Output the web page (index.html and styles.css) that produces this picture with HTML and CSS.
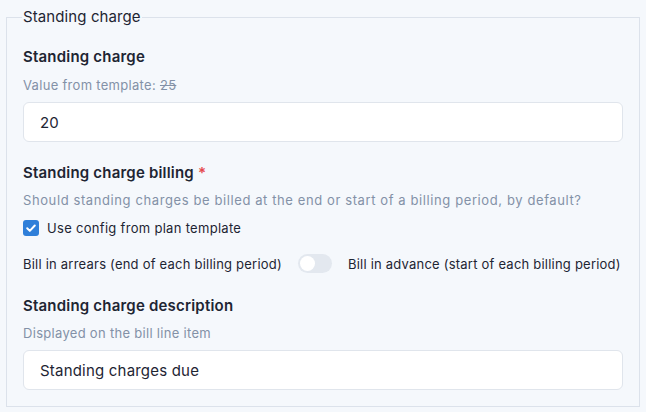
FILE: index.html
```html
<!DOCTYPE html>
<html lang="en">
<head>
<meta charset="utf-8">
<link rel="stylesheet" href="styles.css">
</head>
<body>
<fieldset class="group">
  <legend class="legend">Standing charge</legend>

  <div class="field">
    <div class="label">Standing charge</div>
    <div class="hint">Value from template: <s>25</s></div>
    <div class="input">20</div>
  </div>

  <div class="field">
    <div class="label">Standing charge billing <span class="req">*</span></div>
    <div class="hint hint-wide">Should standing charges be billed at the end or start of a billing period, by default?</div>
    <label class="check">
      <span class="box"><svg viewBox="0 0 16 16" width="16" height="16"><path d="M4.2 8.3l2.6 2.6 5-5.4" fill="none" stroke="#fff" stroke-width="2" stroke-linecap="round" stroke-linejoin="round"/></svg></span>
      <span>Use config from plan template</span>
    </label>
    <div class="switchrow">
      <span class="opt">Bill in arrears (end of each billing period)</span>
      <span class="toggle"><span class="knob"></span></span>
      <span class="opt">Bill in advance (start of each billing period)</span>
    </div>
  </div>

  <div class="field field-last">
    <div class="label">Standing charge description</div>
    <div class="hint hint-tight">Displayed on the bill line item</div>
    <div class="input">Standing charges due</div>
  </div>
</fieldset>
</body>
</html>
```
FILE: styles.css
```css
html, body {
  margin: 0;
  background: #f5f8fc;
}
body {
  padding: 8px 6px 6px 6px;
  font-family: Inter, "Noto Sans", sans-serif;
  color: #1e2533;
}
.group {
  margin: 0;
  min-width: 0;
  border: 1px solid #dce2eb;
  padding: 0 16px 16px 16px;
  height: 399px;
  box-sizing: border-box;
}
.legend {
  font-size: 15px;
  padding: 0 1px;
  margin-left: -1px;
  line-height: 18px;
  letter-spacing: 0.1px;
}
.field {
  display: flex;
  flex-direction: column;
  margin-top: 21px;
}
.field-last {
  margin-top: 23px;
}
.label {
  font-size: 15px;
  font-weight: 600;
  line-height: 20px;
  letter-spacing: 0.2px;
}
.req {
  color: #e5484d;
}
.hint {
  font-size: 13px;
  color: #8391a7;
  line-height: 18px;
  margin-top: 9px;
  letter-spacing: 0.3px;
}
.hint-wide {
  margin-top: 8px;
  letter-spacing: 0.6px;
}
.hint-tight {
  margin-top: 8px;
}
.input {
  margin-top: 8px;
  height: 40px;
  box-sizing: border-box;
  border: 1px solid #e0e5ec;
  border-radius: 6px;
  background: #fff;
  padding: 0 16px;
  display: flex;
  align-items: center;
  font-size: 15px;
  letter-spacing: 0.2px;
}
.check {
  margin-top: 10px;
  display: flex;
  align-items: center;
  gap: 8px;
  font-size: 13px;
  line-height: 18px;
  letter-spacing: 0.3px;
}
.box {
  width: 16px;
  height: 16px;
  border-radius: 3px;
  background: #2f7fd9;
  display: block;
}
.box svg { display: block; }
.switchrow {
  margin-top: 17px;
  display: flex;
  align-items: center;
  gap: 16px;
  font-size: 13px;
  line-height: 18px;
  letter-spacing: 0.22px;
  white-space: nowrap;
}
.opt {
  flex: none;
}
.toggle {
  width: 34px;
  height: 19px;
  border-radius: 10px;
  background: #e3e8ef;
  position: relative;
  flex: none;
}
.knob {
  position: absolute;
  left: 2px;
  top: 2px;
  width: 15px;
  height: 15px;
  border-radius: 50%;
  background: #fff;
}
```
